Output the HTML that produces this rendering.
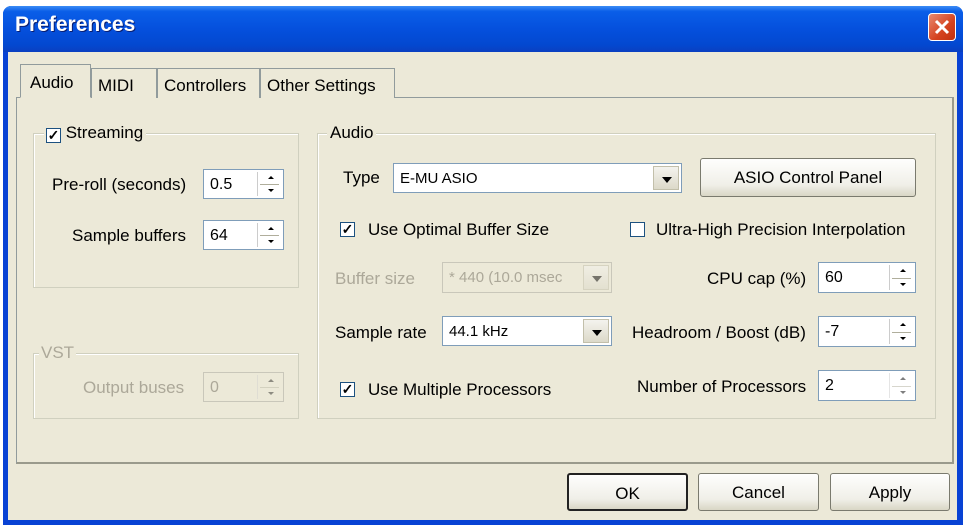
<!DOCTYPE html>
<html><head><style>
*{box-sizing:border-box;margin:0;padding:0}
body{width:968px;height:526px;background:#fff;font-family:"Liberation Sans",sans-serif;font-size:17px;color:#000;position:relative;overflow:hidden}
.a{position:absolute;white-space:nowrap}
.win{left:3px;top:6px;width:960px;height:519px;background:#0842d4;border-radius:8px 8px 0 0}
.title{left:3px;top:6px;width:960px;height:46px;border-radius:8px 8px 0 0;background:linear-gradient(#3c8cf5 0%,#0a5ee8 12%,#0550dd 50%,#0348d0 85%,#0a3fc0 100%)}
.tt{left:15px;top:13px;color:#fff;font-weight:bold;font-size:21px;text-shadow:1px 1px 0 #0a1e70}
.close{left:928px;top:13px;width:28px;height:28px;border:1px solid #fff;border-radius:4px;background:linear-gradient(135deg,#e98a70,#d4421f 60%,#c03010)}
.body{left:8px;top:52px;width:949px;height:468px;background:#ece9d8}
.panel{left:16px;top:97px;width:938px;height:367px;border:1px solid #919b9c;border-right:2px solid #9a9a8c;border-bottom:2px solid #9a9a8c;background:#ece9d8}
.tab{top:68px;height:30px;border:1px solid #919b9c;border-bottom:none;background:#ece9d8;padding:7px 0 0 6px}
.tab.sel{top:64px;height:34px;border-bottom:1px solid #ece9d8;z-index:2;padding:8px 0 0 9px}
.grp{border:1px solid #d0d0bf;box-shadow:inset 1px 1px 0 #fff}
.leg{background:#ece9d8;padding:0 3px}
.dis{color:#aca899}
.edit{background:#fff;border:1px solid #7f9db9;padding:6px 0 0 6px;font-size:16px}
.edit.d{background:#ece9d8;border-color:#c9c7ba;color:#aca899}
.spin{position:absolute;right:2px;top:2px;bottom:2px;width:24px;border-left:1px solid #ccc}
.spin:before,.spin:after{content:"";position:absolute;left:10px;border:3px solid transparent}
.spin:before{top:4px;border-bottom:3px solid #000;border-top:0}
.spin:after{bottom:4px;border-top:3px solid #000;border-bottom:0}
.spin i{position:absolute;left:2px;right:2px;top:50%;height:1px;background:#b0ae9c}
.dd{position:absolute;right:2px;top:2px;bottom:2px;width:26px;background:linear-gradient(#f4f3ee,#dcd9c9);border:1px solid #c2bfaa}
.dd:after{content:"";position:absolute;left:8px;top:10px;border:5px solid transparent;border-top:6px solid #000;border-bottom:0}
.cb{width:15px;height:15px;border:1px solid #1c5180;background:#fff;font-size:14px;line-height:12px;text-align:center;font-weight:bold}
.btn{border:1px solid #7a7a6e;border-radius:3px;background:linear-gradient(#fefefd,#f0efe8 70%,#d9d6c5);text-align:center;padding-top:9px}
</style></head><body>
<div class="a win"></div>
<div class="a title"></div>
<div class="a tt">Preferences</div>
<div class="a close"><svg width="26" height="26"><path d="M7 7L19 19M19 7L7 19" stroke="#fff" stroke-width="3"/></svg></div>
<div class="a body"></div>
<div class="a panel"></div>
<div class="a tab sel" style="left:20px;width:71px">Audio</div>
<div class="a tab" style="left:91px;width:66px">MIDI</div>
<div class="a tab" style="left:157px;width:103px">Controllers</div>
<div class="a tab" style="left:260px;width:135px">Other Settings</div>

<div class="a grp" style="left:33px;top:133px;width:266px;height:155px"></div>
<div class="a leg" style="left:44px;top:123px;padding-left:2px"><span class="cb" style="display:inline-block;vertical-align:-2px">✓</span> Streaming</div>
<div class="a" style="left:52px;top:175px">Pre-roll (seconds)</div>
<div class="a edit" style="left:203px;top:169px;width:81px;height:30px">0.5<div class="spin"><i></i></div></div>
<div class="a" style="left:72px;top:226px">Sample buffers</div>
<div class="a edit" style="left:203px;top:220px;width:81px;height:30px">64<div class="spin"><i></i></div></div>

<div class="a grp" style="left:33px;top:353px;width:266px;height:66px"></div>
<div class="a leg dis" style="left:39px;top:343px;padding:0 2px">VST</div>
<div class="a dis" style="left:83px;top:378px">Output buses</div>
<div class="a edit d" style="left:203px;top:372px;width:81px;height:30px">0<div class="spin" style="opacity:.4"><i></i></div></div>

<div class="a grp" style="left:317px;top:133px;width:619px;height:286px"></div>
<div class="a leg" style="left:327px;top:123px">Audio</div>
<div class="a" style="left:343px;top:168px">Type</div>
<div class="a edit" style="left:393px;top:163px;width:289px;height:30px;font-size:15px">E-MU ASIO<div class="dd"></div></div>
<div class="a btn" style="left:700px;top:158px;width:216px;height:39px">ASIO Control Panel</div>
<div class="a cb" style="left:340px;top:222px">✓</div>
<div class="a" style="left:368px;top:220px">Use Optimal Buffer Size</div>
<div class="a cb" style="left:630px;top:222px"></div>
<div class="a" style="left:656px;top:220px">Ultra-High Precision Interpolation</div>
<div class="a dis" style="left:335px;top:269px">Buffer size</div>
<div class="a edit d" style="left:442px;top:262px;width:170px;height:31px;overflow:hidden;font-size:15px">* 440 (10.0 msec<div class="dd" style="opacity:.5"></div></div>
<div class="a" style="left:707px;top:269px">CPU cap (%)</div>
<div class="a edit" style="left:818px;top:262px;width:98px;height:31px">60<div class="spin"><i></i></div></div>
<div class="a" style="left:335px;top:323px">Sample rate</div>
<div class="a edit" style="left:442px;top:316px;width:170px;height:30px;font-size:15px">44.1 kHz<div class="dd"></div></div>
<div class="a" style="left:632px;top:323px">Headroom / Boost (dB)</div>
<div class="a edit" style="left:818px;top:316px;width:98px;height:31px">-7<div class="spin"><i></i></div></div>
<div class="a cb" style="left:340px;top:382px">✓</div>
<div class="a" style="left:368px;top:380px">Use Multiple Processors</div>
<div class="a" style="left:637px;top:377px">Number of Processors</div>
<div class="a edit" style="left:818px;top:370px;width:98px;height:31px">2<div class="spin" style="opacity:.5"><i></i></div></div>

<div class="a btn" style="left:567px;top:473px;width:121px;height:38px;border:2px solid #222">OK</div>
<div class="a btn" style="left:698px;top:473px;width:121px;height:38px">Cancel</div>
<div class="a btn" style="left:830px;top:473px;width:120px;height:38px">Apply</div>
</body></html>
